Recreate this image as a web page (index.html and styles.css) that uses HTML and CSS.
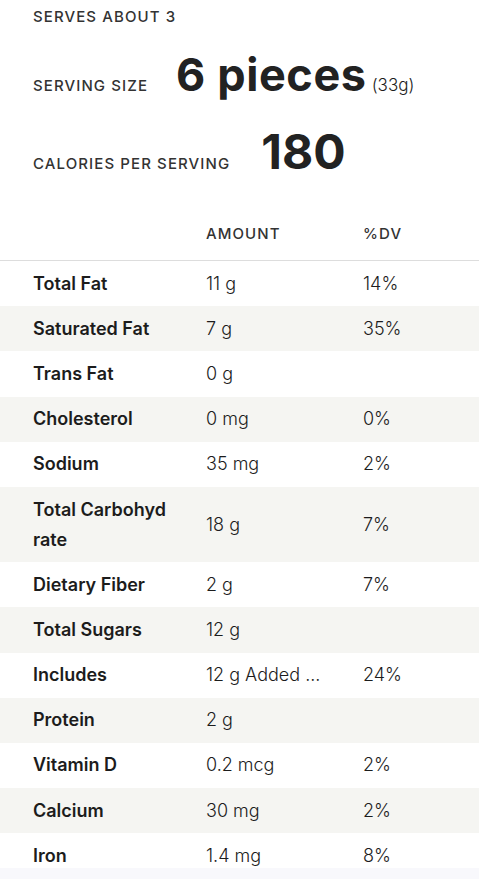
FILE: index.html
```html
<!DOCTYPE html>
<html lang="en">
<head>
  <meta charset="UTF-8">
  <title>Nutrition Facts</title>
  <meta name="viewport" content="width=device-width, initial-scale=1.0">
  <link rel="stylesheet" href="styles.css">
</head>
<body>

  <section class="summary">
    <p class="serves">Serves about 3</p>
    <div class="summary-row serving">
      <span class="summary-label">Serving size</span>
      <span class="big">6 pieces</span>
      <span class="grams">(33g)</span>
    </div>
    <div class="summary-row calories">
      <span class="summary-label">Calories per serving</span>
      <span class="big">180</span>
    </div>
  </section>

  <table class="facts">
    <thead>
      <tr>
        <th></th>
        <th>Amount</th>
        <th>%DV</th>
      </tr>
    </thead>
    <tbody>
      <tr><td>Total Fat</td><td>11 g</td><td>14%</td></tr>
      <tr><td>Saturated Fat</td><td>7 g</td><td>35%</td></tr>
      <tr><td>Trans Fat</td><td>0 g</td><td></td></tr>
      <tr><td>Cholesterol</td><td>0 mg</td><td>0%</td></tr>
      <tr><td>Sodium</td><td>35 mg</td><td>2%</td></tr>
      <tr><td>Total Carbohydrate</td><td>18 g</td><td>7%</td></tr>
      <tr><td>Dietary Fiber</td><td>2 g</td><td>7%</td></tr>
      <tr><td>Total Sugars</td><td>12 g</td><td></td></tr>
      <tr><td>Includes</td><td>12 g Added ...</td><td>24%</td></tr>
      <tr><td>Protein</td><td>2 g</td><td></td></tr>
      <tr><td>Vitamin D</td><td>0.2 mcg</td><td>2%</td></tr>
      <tr><td>Calcium</td><td>30 mg</td><td>2%</td></tr>
      <tr><td>Iron</td><td>1.4 mg</td><td>8%</td></tr>
    </tbody>
  </table>

  <!-- faint bar pinned to the bottom edge -->
  <div class="page-end"></div>

</body>
</html>
```

FILE: styles.css
```css
body {
  font-family: 'Inter', 'Noto Sans', sans-serif;
  margin: 0;
  padding: 0;
  background: #fff;
  color: #1c1c1c;
}
.summary {
  padding: 7px 0 0 33px;
}
.serves {
  margin: 0;
  font-size: 15px;
  line-height: 20px;
  font-weight: 500;
  letter-spacing: 1.1px;
  text-transform: uppercase;
  color: #333;
}
.summary-row {
  display: flex;
  align-items: baseline;
}
.summary-label {
  font-size: 15px;
  font-weight: 500;
  letter-spacing: 1.1px;
  text-transform: uppercase;
  color: #333;
  margin-right: 28px;
}
.big {
  font-weight: 700;
  color: #222;
}
.serving {
  margin-top: 23px;
}
.serving .big {
  font-size: 45px;
  line-height: 50px;
  letter-spacing: 0.6px;
}
.grams {
  font-size: 17px;
  font-weight: 300;
  margin-left: 5px;
}
.calories {
  margin-top: 24px;
}
.calories .big {
  font-size: 48px;
  line-height: 56px;
  margin-left: 3px;
}
.facts {
  width: 100%;
  border-collapse: collapse;
  margin-top: 28px;
}
.facts th {
  text-align: left;
  font-size: 15px;
  font-weight: 500;
  letter-spacing: 1.1px;
  text-transform: uppercase;
  color: #333;
  padding: 16px 0 16px;
  line-height: 20px;
  border-bottom: 1px solid #ddd;
}
.facts td {
  font-size: 18px;
  font-weight: 300;
  line-height: 30px;
  padding: 7.6px 0;
  vertical-align: middle;
}
.facts td:first-child,
.facts th:first-child {
  width: 138px;
  padding-left: 33px;
  padding-right: 35px;
  font-weight: 600;
  word-break: break-all;
}
.facts td:nth-child(2),
.facts th:nth-child(2) {
  width: 157px;
}
.facts tbody tr:nth-child(even) {
  background: #f5f5f2;
}
.page-end {
  position: fixed;
  left: 0;
  right: 0;
  bottom: 0;
  height: 11px;
  background: #f8f8fc;
}
```
